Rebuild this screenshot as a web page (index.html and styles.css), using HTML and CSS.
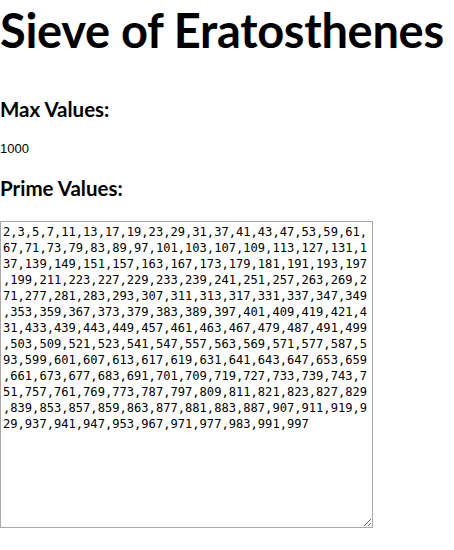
FILE: index.html
```html
<!DOCTYPE html>
<html>
<head>
<meta charset="utf-8">
<title>Sieve of Eratosthenes</title>
<link rel="stylesheet" href="styles.css">
</head>
<body>
<main class="page">
  <h1 class="title">Sieve of Eratosthenes</h1>
  <h3 class="label">Max Values:</h3>
  <div class="max-value">1000</div>
  <h3 class="label label-primes">Prime Values:</h3>
  <textarea class="primes" readonly>2,3,5,7,11,13,17,19,23,29,31,37,41,43,47,53,59,61,67,71,73,79,83,89,97,101,103,107,109,113,127,131,137,139,149,151,157,163,167,173,179,181,191,193,197,199,211,223,227,229,233,239,241,251,257,263,269,271,277,281,283,293,307,311,313,317,331,337,347,349,353,359,367,373,379,383,389,397,401,409,419,421,431,433,439,443,449,457,461,463,467,479,487,491,499,503,509,521,523,541,547,557,563,569,571,577,587,593,599,601,607,613,617,619,631,641,643,647,653,659,661,673,677,683,691,701,709,719,727,733,739,743,751,757,761,769,773,787,797,809,811,821,823,827,829,839,853,857,859,863,877,881,883,887,907,911,919,929,937,941,947,953,967,971,977,983,991,997</textarea>
</main>
</body>
</html>
```

FILE: styles.css
```css
html, body {
  margin: 0;
  padding: 0;
  background: #ffffff;
}

body {
  font-family: Lato, "Open Sans", sans-serif;
  color: #000000;
}

.page {
  display: flex;
  flex-direction: column;
  align-items: flex-start;
}

.title {
  margin: 0;
  font-size: 47px;
  letter-spacing: -0.3px;
  line-height: 60px;
  font-weight: 700;
  white-space: nowrap;
}

.label {
  margin: 38px 0 0 0;
  font-size: 20.5px;
  line-height: 22px;
  font-weight: 700;
}

.max-value {
  margin-top: 21px;
  font-family: "Liberation Sans", Arial, sans-serif;
  font-size: 13px;
  line-height: 16px;
}

.label-primes {
  margin-top: 20px;
}

.primes {
  margin: 22px 0 0 0;
  box-sizing: border-box;
  width: 373px;
  height: 307px;
  padding: 2px;
  border: 1px solid #a9a9a9;
  font-family: "DejaVu Sans Mono", "Liberation Mono", monospace;
  font-size: 12.1px;
  line-height: 16px;
  color: #000000;
  resize: both;
  overflow: auto;
}
```
